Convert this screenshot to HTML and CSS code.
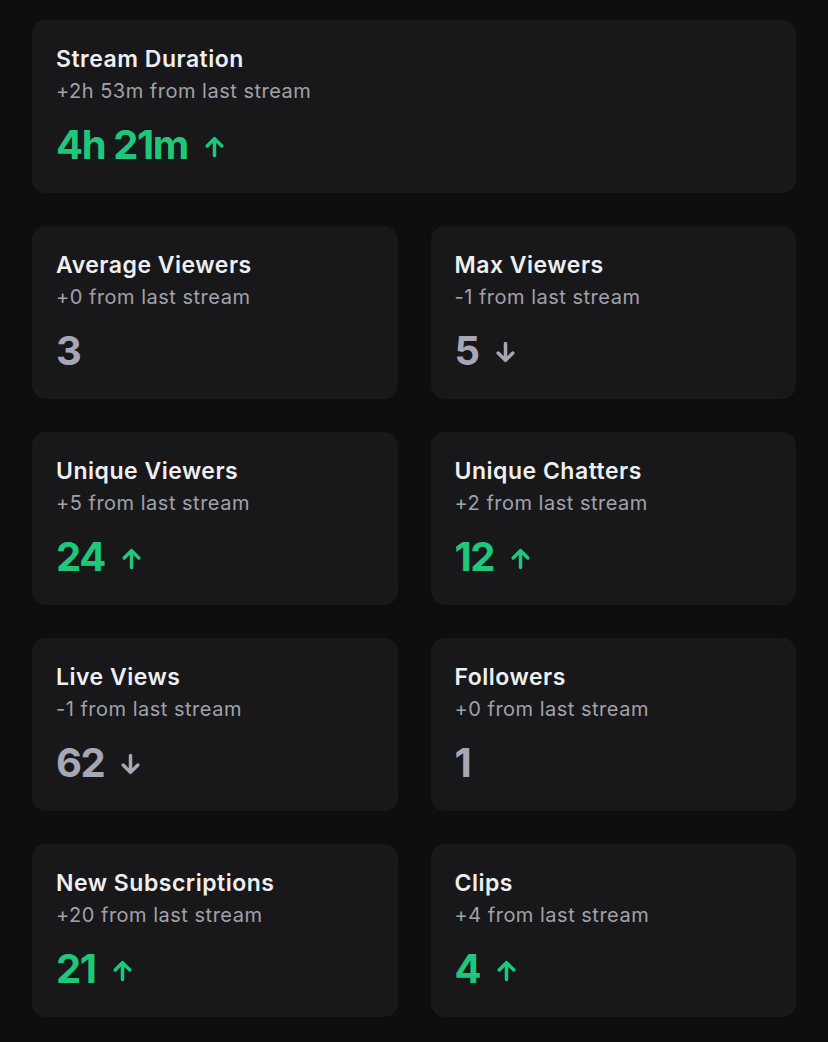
FILE: index.html
```html
<!doctype html>
<html lang="en">
  <head>
    <meta charset="UTF-8" />
    <title>Stream Stats</title>
    <link rel="stylesheet" href="styles.css">
  </head>
  <body>
    <div class="stats">
      <!-- Full width card -->
      <div class="card card-wide">
        <h3 class="card-title">Stream Duration</h3>
        <p class="card-sub">+2h 53m from last stream</p>
        <div class="card-value up">4h 21m
          <svg class="arrow" viewBox="0 0 24 24"><path d="M12 20V5M5.5 11.5L12 5l6.5 6.5" /></svg>
        </div>
      </div>

      <div class="card">
        <h3 class="card-title">Average Viewers</h3>
        <p class="card-sub">+0 from last stream</p>
        <div class="card-value">3</div>
      </div>
      <div class="card">
        <h3 class="card-title">Max Viewers</h3>
        <p class="card-sub">-1 from last stream</p>
        <div class="card-value">5
          <svg class="arrow" viewBox="0 0 24 24"><path d="M12 4v15M5.5 12.5L12 19l6.5-6.5" /></svg>
        </div>
      </div>

      <div class="card">
        <h3 class="card-title">Unique Viewers</h3>
        <p class="card-sub">+5 from last stream</p>
        <div class="card-value up">24
          <svg class="arrow" viewBox="0 0 24 24"><path d="M12 20V5M5.5 11.5L12 5l6.5 6.5" /></svg>
        </div>
      </div>
      <div class="card">
        <h3 class="card-title">Unique Chatters</h3>
        <p class="card-sub">+2 from last stream</p>
        <div class="card-value up">12
          <svg class="arrow" viewBox="0 0 24 24"><path d="M12 20V5M5.5 11.5L12 5l6.5 6.5" /></svg>
        </div>
      </div>

      <div class="card">
        <h3 class="card-title">Live Views</h3>
        <p class="card-sub">-1 from last stream</p>
        <div class="card-value">62
          <svg class="arrow" viewBox="0 0 24 24"><path d="M12 4v15M5.5 12.5L12 19l6.5-6.5" /></svg>
        </div>
      </div>
      <div class="card">
        <h3 class="card-title">Followers</h3>
        <p class="card-sub">+0 from last stream</p>
        <div class="card-value">1</div>
      </div>

      <div class="card">
        <h3 class="card-title">New Subscriptions</h3>
        <p class="card-sub">+20 from last stream</p>
        <div class="card-value up">21
          <svg class="arrow" viewBox="0 0 24 24"><path d="M12 20V5M5.5 11.5L12 5l6.5 6.5" /></svg>
        </div>
      </div>
      <div class="card">
        <h3 class="card-title">Clips</h3>
        <p class="card-sub">+4 from last stream</p>
        <div class="card-value up">4
          <svg class="arrow" viewBox="0 0 24 24"><path d="M12 20V5M5.5 11.5L12 5l6.5 6.5" /></svg>
        </div>
      </div>
    </div>
  </body>
</html>
```

FILE: styles.css
```css
body {
  margin: 0;
  background: #0e0e10;
  font-family: Inter, "Noto Sans", sans-serif;
  color: #efeff1;
}

.stats {
  display: grid;
  grid-template-columns: 1fr 1fr;
  gap: 33px;
  padding: 20px 32px 25px;
}

.card {
  background: #18181b;
  border-radius: 14px;
  padding: 25px 24px 25px;
  height: 173px;
  box-sizing: border-box;
}

.card-wide {
  grid-column: 1 / -1;
}

.card-title {
  margin: 0;
  font-size: 23px;
  line-height: 28px;
  font-weight: 600;
  letter-spacing: 0.022em;
  color: #efeff1;
}

.card-sub {
  margin: 5px 0 0;
  font-size: 20px;
  line-height: 26px;
  font-weight: 400;
  letter-spacing: 0.025em;
  color: #a1a1aa;
}

.card-value {
  display: flex;
  align-items: center;
  gap: 13px;
  margin-top: 19px;
  font-size: 40px;
  line-height: 44px;
  font-weight: 700;
  letter-spacing: -0.035em;
  color: #a6a6b4;
}

.card-value.up {
  color: #1ec77a;
}

.arrow {
  width: 27px;
  height: 27px;
  margin-top: 2px;
  fill: none;
  stroke: currentColor;
  stroke-width: 3.1;
  stroke-linecap: round;
  stroke-linejoin: round;
}
```
